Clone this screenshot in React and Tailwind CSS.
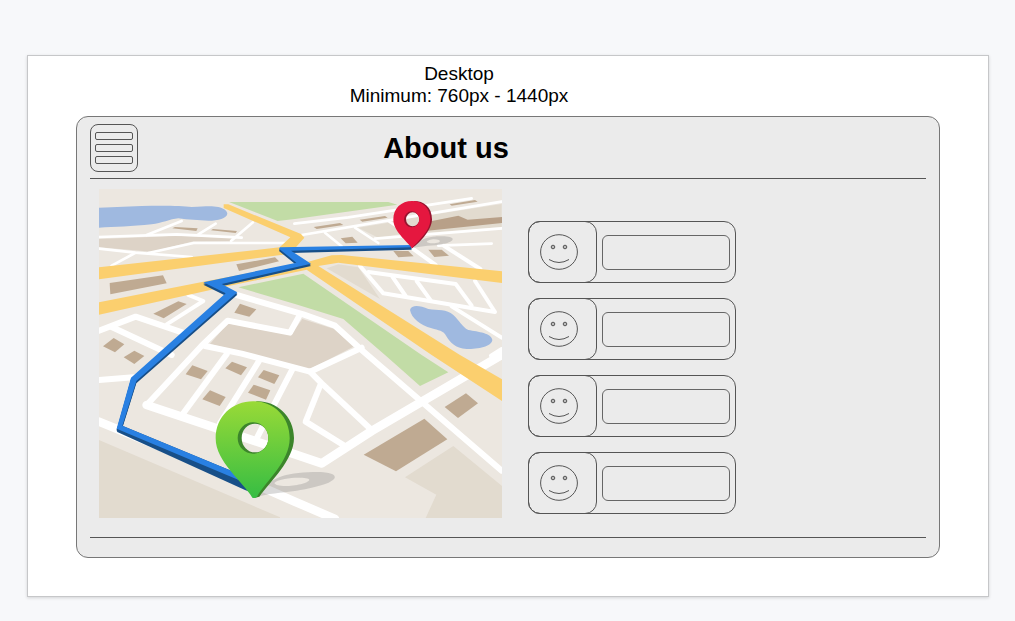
import React from "react";

const buildings = [
  "232,130 240,126 308,130 304,138",
  "348,136 354,132 426,138 422,144",
  "424,238 540,217 552,229 432,258",
  "44,294 204,271 215,295 46,328",
  "175,386 250,349 275,357 206,400",
  "435,356 484,373 463,395 418,383",
  "24,484 56,459 88,478 60,502",
  "86,517 118,497 148,513 118,537",
  "656,126 735,114 745,120 665,132",
  "794,104 870,93 878,98 802,110",
  "1064,58 1140,45 1148,50 1070,62",
  "737,160 772,155 788,173 752,175",
  "895,198 940,198 956,214 910,217",
  "1000,194 1040,194 1062,212 1018,216",
  "272,568 292,541 338,558 318,583",
  "391,550 411,530 456,547 438,571",
  "489,577 506,555 553,571 538,597",
  "459,623 476,599 526,616 513,644",
  "322,643 345,616 392,636 374,663",
  "806,809 988,701 1057,763 903,859",
  "1049,666 1113,625 1149,655 1089,699",
];

const lanes = [
  "12,156 245,148 440,158",
  "155,150 260,108",
  "310,148 362,116",
  "408,168 474,112",
  "160,204 296,174 580,174",
  "12,191 120,203 290,216",
  "50,242 120,204",
  "598,116 760,97 1130,40",
  "620,150 900,103 1220,50",
  "840,161 1220,130",
  "1030,182 1190,176",
  "690,143 740,184",
  "780,128 850,174",
  "880,108 925,138",
];

const streets = [
  "945,185 1022,240",
  "1046,182 1156,252",
  "795,243 865,325 1200,381 1140,288",
  "820,261 1082,297 1130,362",
  "892,275 932,333",
  "965,288 1007,346",
  "1070,364 1220,458",
  "1188,512 1220,492",
  "280,330 325,348 215,418",
];

const avenues = [
  "12,437 122,395 270,445",
  "50,426 230,510",
  "12,585 115,577",
  "425,330 625,388 720,422 800,495 980,650 1220,857",
  "612,394 585,443 398,407 320,482 155,660",
  "330,483 440,506 645,560 800,488",
  "645,560 680,595 830,735",
  "676,600 632,710 750,783",
  "395,508 265,685",
  "492,528 375,715",
  "592,553 480,770",
];

const boulevards = [
  "155,660 600,808 680,835 830,738 980,650 1220,510",
  "12,710 140,762 520,915 600,950 720,1002",
];

const route =
  "555,187 948,180 950,187 588,197 648,236 380,297 427,322 124,588 82,722 405,856 460,895 440,889 65,731 108,578 392,325 325,292 604,233 552,191";

function Roads({ items, width }) {
  return (
    <g fill="none" stroke="#fff" strokeWidth={width} strokeLinecap="round" strokeLinejoin="round">
      {items.map((points) => (
        <polyline key={points} points={points} />
      ))}
    </g>
  );
}

function RouteMap() {
  return (
    <svg viewBox="12 12 1209 987" role="img" aria-label="Route map" className="block h-auto w-full">
      <defs>
        <linearGradient id="pin-green" x1="0" y1="0" x2="0" y2="1">
          <stop offset="0" stopColor="#99da37" />
          <stop offset="1" stopColor="#36bd43" />
        </linearGradient>
      </defs>
      <rect x="12" y="12" width="1209" height="987" fill="#ece7e0" />
      <path d="M12 68L140 63C200 62 260 62 290 66C330 64 350 62 370 66C387 70 397 78 397 86C395 100 370 107 340 107C310 106 280 104 250 100C225 102 200 115 170 118C110 124 60 126 12 128Z" fill="#9fb9e0" />
      <polygon points="402,51 880,51 907,59 600,102 548,108" fill="#c2dca6" />
      <g fill="#ddd3c7">
        <polygon points="12,162 240,153 410,158 405,168 296,169 170,200 12,187" />
        <polygon points="345,477 398,415 588,450 622,402 718,432 775,485 645,553 440,500" />
      </g>
      <g fill="#e2dbcf">
        <polygon points="12,765 555,997 555,999 12,999" />
        <polygon points="930,877 1075,783 1221,903 1221,999 992,999 1024,929" />
        <polygon points="695,250 730,238 790,247 855,342" />
        <polygon points="790,128 880,113 930,145 850,158" />
        <polygon points="890,108 1220,57 1220,126 960,146" />
      </g>
      <polygon points="1000,110 1090,92 1118,104 1221,96 1221,114 990,138" fill="#b8a088" />
      <polygon points="430,307 625,266 980,510 1060,562 975,603 870,510 745,402 600,357" fill="#c2dca6" />
      <g fill="#bfaa92">
        {buildings.map((points) => (
          <polygon key={points} points={points} />
        ))}
      </g>
      <Roads items={lanes} width="8" />
      <Roads items={streets} width="12" />
      <Roads items={avenues} width="18" />
      <Roads items={boulevards} width="26" />
      <g fill="#fbcf6e">
        <polygon points="386,58 400,58 618,147 628,158 600,190 580,207 12,283 12,247 554,187 586,157 386,69" />
        <polygon points="12,352 325,290 640,230 710,211 740,210 1221,259 1221,294 730,233 670,243 1095,510 1221,583 1221,648 1010,510 635,254 390,305 12,389" />
      </g>
      <path d="M945 375C950 358 975 362 1000 372C1030 376 1055 372 1075 390C1095 408 1100 425 1120 435C1150 440 1190 445 1192 465C1190 485 1150 492 1115 492C1080 490 1065 470 1055 455C1045 435 1030 437 1010 430C975 420 950 400 945 375Z" fill="#9fb9e0" />

      <g fill="#777" fillOpacity=".27" fillRule="evenodd">
        <path d="M955 189C975 160 1000 154 1040 154C1085 154 1082 170 1045 177C1015 183 980 182 955 189ZM995 171C1005 179 1045 174 1032 165C1020 160 998 163 995 171Z" />
        <path d="M482 938C520 885 555 865 640 862C700 859 723 867 719 879C710 895 665 907 605 917C555 925 520 923 482 938ZM538 894C545 912 640 900 643 884C640 876 560 875 538 894Z" />
      </g>

      <g fill="#184f88">
        <polygon points={route} transform="translate(0 7)" />
        <polygon points={route} transform="translate(0 4)" />
        <polygon points="65,731 82,722 440,870 475,925 450,915 67,741" />
      </g>
      <polygon points={route} fill="#2980e2" />

      <g fillRule="evenodd">
        <path d="M952 190C975 172 1011 135 1011 103C1011 65 985 48 958 48L915 85L915 130ZM933 103A20 21 0 1 0 973 103A20 21 0 1 0 933 103Z" fill="#96142f" />
        <path d="M951 190C934 167 895 139 895 103C895 70 919 48 951 48C983 48 1006 70 1006 103C1006 139 970 167 951 190ZM927 103A23 24 0 1 0 973 103A23 24 0 1 0 927 103Z" fill="#e5173f" />
        <path d="M480 938L493 935C525 890 597 825 597 759C597 690 540 647 485 649L400 700L400 830ZM440 759A40 43 0 1 0 520 759A40 43 0 1 0 440 759Z" fill="#3c852b" />
        <path d="M472 938C444 890 362 831 362 760C362 695 412 649 474 649C536 649 584 695 584 760C584 831 511 890 486 935Q480 941 472 938ZM428 759A46 47 0 1 0 520 759A46 47 0 1 0 428 759Z" fill="url(#pin-green)" />
      </g>
    </svg>
  );
}

function Smiley() {
  return (
    <svg viewBox="0 0 38 36" aria-hidden="true" className="h-9 w-[38px]" fill="none" stroke="#555">
      <ellipse cx="19" cy="18" rx="18.4" ry="17.3" />
      <circle cx="13" cy="13" r="1.8" fill="#bbb" />
      <circle cx="25" cy="13" r="1.8" fill="#bbb" />
      <path d="M9 25.5Q19 31.5 29 25.5" />
    </svg>
  );
}

function MemberRow({ index }) {
  return (
    <li className="flex h-[62px] w-[208px] items-center rounded-xl border border-[#555]">
      <span className="-my-px -ml-px flex h-[62px] w-[69px] shrink-0 items-center justify-center rounded-xl border border-[#555] pr-[7px]">
        <Smiley />
      </span>
      <input
        type="text"
        aria-label={`Member ${index}`}
        className="mx-[5px] h-[35px] min-w-0 flex-1 rounded-md border border-[#666] bg-transparent px-2 text-sm outline-none"
      />
    </li>
  );
}

export default function App() {
  return (
    <div className="min-h-screen bg-[#f7f8fa] pt-[55px] pr-[26px] pb-6 pl-[27px] font-['Liberation_Sans',Arial,sans-serif] text-black">
      <main className="border border-[#c6c7c9] bg-white px-12 pt-[7px] pb-[38px] shadow-[0_1px_3px_rgba(0,0,0,0.15)]">
        <p className="pr-[98px] text-center text-[19px] leading-[22px]">
          Desktop
          <br />
          Minimum: 760px - 1440px
        </p>

        <section className="mt-[9px] rounded-xl border border-[#777] bg-[#ebebeb] px-[13px] pt-[7px] pb-[19px]">
          <header className="flex items-center">
            <button
              type="button"
              aria-label="Menu"
              className="flex h-12 w-12 shrink-0 flex-col items-center justify-center gap-1 rounded-lg border border-[#555]"
            >
              <span className="h-2 w-[38px] rounded-xs border border-[#555]" />
              <span className="h-2 w-[38px] rounded-xs border border-[#555]" />
              <span className="h-2 w-[38px] rounded-xs border border-[#555]" />
            </button>
            <h1 className="flex-1 pr-[172px] text-center text-[29px] leading-8 font-bold">About us</h1>
          </header>

          <hr className="mt-1.5 border-[#555]" />

          <div className="mt-2.5 grid grid-cols-[403fr_398fr] gap-[26px] pl-[9px]">
            <RouteMap />
            <ul className="mt-8 flex flex-col gap-[15px]">
              {[1, 2, 3, 4].map((index) => (
                <MemberRow key={index} index={index} />
              ))}
            </ul>
          </div>

          <hr className="mt-[19px] border-[#555]" />
        </section>
      </main>
    </div>
  );
}
